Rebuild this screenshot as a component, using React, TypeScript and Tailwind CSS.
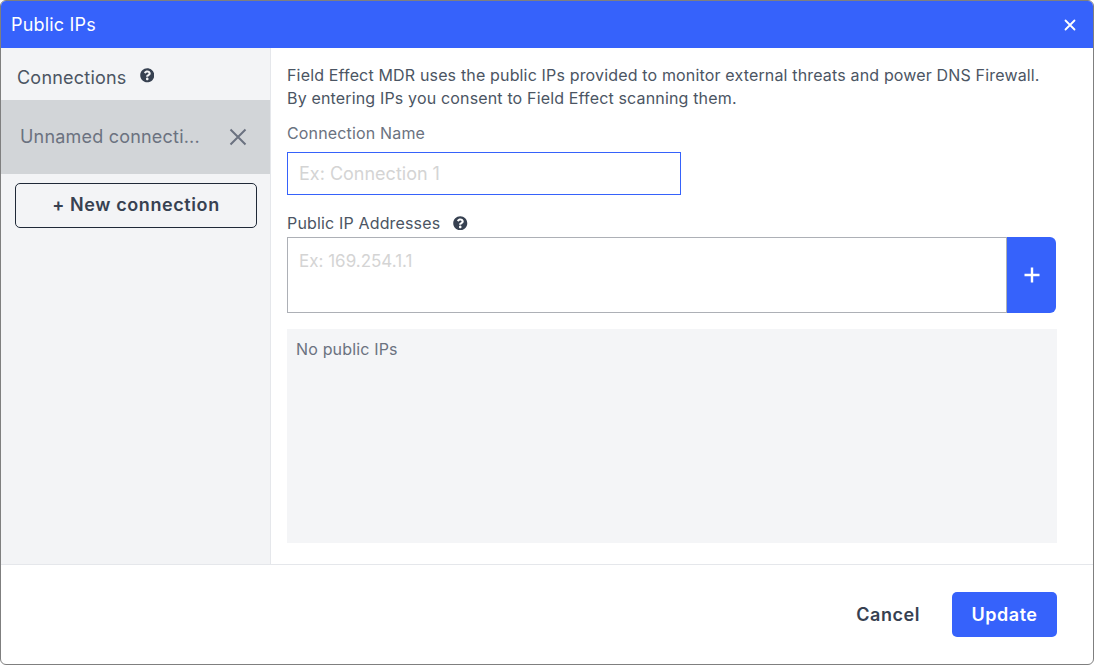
import { FaQuestionCircle } from "react-icons/fa";

export default function App() {
  return (
    <div className="w-[1094px] h-[665px] bg-white overflow-hidden" style={{ fontFamily: "Inter, sans-serif" }}>
      <div className="w-full h-full border border-[#7f7f7f] rounded-[6px] overflow-hidden flex flex-col bg-white">
        <div className="h-[47px] bg-[#3662fb] flex items-center justify-between pl-[10px] pr-[15px] shrink-0">
          <span className="text-white text-[18px] leading-[24px] tracking-[0.18px]">Public IPs</span>
          <svg width="16" height="16" viewBox="0 0 16 16" fill="none" stroke="white" strokeWidth="1.8" strokeLinecap="round" className="ml-[1px]">
            <path d="M3.5 3.5 L12.5 12.5 M12.5 3.5 L3.5 12.5" />
          </svg>
        </div>
        <div className="h-[516px] flex shrink-0">
          <div className="w-[270px] bg-[#f3f4f6] border-r border-[#e5e7eb] shrink-0 flex flex-col">
            <div className="h-[52px] flex items-center pl-[16px] gap-[13px] pt-[6px] text-[#4b5563]">
              <span className="text-[18px] tracking-[0.22px]">Connections</span>
              <FaQuestionCircle className="text-[#374151] text-[14.5px] -mt-[3px]" />
            </div>
            <div className="h-[74px] bg-[#d2d5d8] flex items-center justify-between pl-[19px] pr-[22px] pb-[1px]">
              <span className="text-[18px] text-[#6b7280] tracking-[0.2px]">Unnamed connecti...</span>
              <svg width="20" height="20" viewBox="0 0 20 20" fill="none" stroke="#6b7280" strokeWidth="2">
                <path d="M2.5 2.5 L17.5 17.5 M17.5 2.5 L2.5 17.5" />
              </svg>
            </div>
            <div className="mt-[9px] ml-[14px] mr-[13px] h-[45px] pb-[2px] border border-[#1f2937] rounded-[5px] flex items-center justify-center text-[18px] font-semibold text-[#374151] tracking-[0.6px]">
              + New connection
            </div>
          </div>
          <div className="flex-1 pl-[16px] pr-[36px] flex flex-col">
            <p className="mt-[16px] text-[16px] leading-[23px] text-[#4b5563] tracking-[0.16px] whitespace-nowrap">
              Field Effect MDR uses the public IPs provided to monitor external threats and power DNS Firewall.
              <br />
              By entering IPs you consent to Field Effect scanning them.
            </p>
            <label className="mt-[12px] text-[16px] leading-[22px] text-[#6b7280] tracking-[0.16px]">Connection Name</label>
            <input
              readOnly
              placeholder="Ex: Connection 1"
              className="mt-[8px] w-[394px] h-[43px] border border-[#3662fb] px-[11px] text-[18px] outline-none placeholder:text-[#d4d4d4] bg-white"
            />
            <div className="mt-[17px] flex items-center gap-[13px] h-[22px]">
              <span className="text-[16px] leading-[22px] text-[#4b5563] tracking-[0.16px]">Public IP Addresses</span>
              <FaQuestionCircle className="text-[#374151] text-[14.5px]" />
            </div>
            <div className="mt-[3px] flex h-[76px] mr-[1px]">
              <textarea
                readOnly
                placeholder="Ex: 169.254.1.1"
                className="flex-1 h-full border border-[#adb0b6] px-[11px] py-[11px] text-[17px] leading-[24px] resize-none outline-none placeholder:text-[#d4d4d4] bg-white"
              />
              <div className="w-[49px] h-full bg-[#3662fb] rounded-r-[6px] flex items-center justify-center">
                <svg width="18" height="18" viewBox="0 0 18 18" fill="none" stroke="white" strokeWidth="2.4">
                  <path d="M9 1.5 V16.5 M1.5 9 H16.5" />
                </svg>
              </div>
            </div>
            <div className="mt-[16px] h-[214px] bg-[#f4f5f7] pl-[9px] pt-[9px] text-[16px] leading-[22px] text-[#6b7280] tracking-[0.16px]">
              No public IPs
            </div>
          </div>
        </div>
        <div className="flex-1 border-t border-[#e5e7eb] flex items-center justify-end pr-[36px] gap-[32px]">
          <span className="text-[18px] font-semibold text-[#374151] tracking-[0.54px]">Cancel</span>
          <div className="w-[105px] h-[45px] bg-[#3662fb] rounded-[5px] flex items-center justify-center text-white text-[18px] font-semibold tracking-[0.54px]">
            Update
          </div>
        </div>
      </div>
    </div>
  );
}
